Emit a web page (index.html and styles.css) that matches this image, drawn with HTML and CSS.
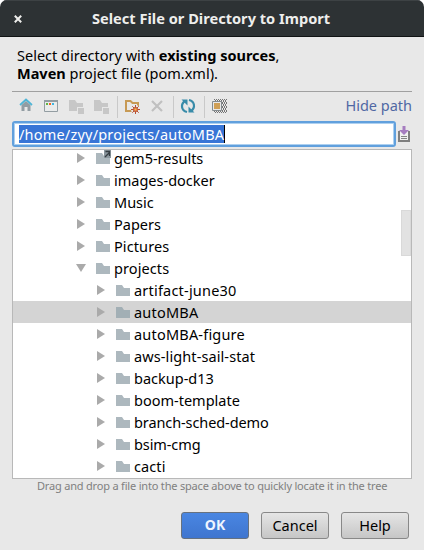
FILE: index.html
```
<!DOCTYPE html>
<html lang="en">
<head>
<meta charset="utf-8">
<title>Select File or Directory to Import</title>
<link rel="stylesheet" href="styles.css">
</head>
<body>
<svg width="0" height="0" class="defs">
  <defs>
    <symbol id="folder" viewBox="0 0 14 11"><path d="M0 0H6L8 3H14V11H0Z"/></symbol>
    <symbol id="right" viewBox="0 0 8 10"><path d="M0 0L8 5L0 10Z"/></symbol>
    <symbol id="down" viewBox="0 0 10 8"><path d="M0 0H10L5 8Z"/></symbol>
  </defs>
</svg>
<div class="window">
  <header class="titlebar">
    <svg class="close" width="8" height="8" viewBox="0 0 8 8"><path d="M.8 .8L7.2 7.2M7.2 .8L.8 7.2" stroke="#eeeeec" stroke-width="2"/></svg>
    <h1>Select File or Directory to Import</h1>
  </header>
  <main>
    <p class="intro">Select directory with <b>existing sources</b>,<br><b>Maven</b> project file (pom.xml).</p>
    <div class="toolbar">
      <svg width="220" height="28" viewBox="12 92 220 28">
        <path d="M21.5 105L26 101L30.500 105V111H27.500V107H24.500V111H21.500Z" fill="#929da3"/>
        <path d="M20 105L26 99.500L32 105" fill="none" stroke="#4fb5d6" stroke-width="1.700"/>
        <path d="M44.500 100.500H57.500V111.500H44.500Z" fill="#e9ebeb" stroke="#939da2"/><path d="M44 100H58V102H44Z" fill="#939da2"/>
        <path d="M46 103h2v2h-2z" fill="#62b543"/><path d="M49 103h2v2h-2z" fill="#f26522"/><path d="M52 103h2v2h-2z" fill="#40b6e0"/>
        <path d="M69 100H75L77 103H83V107H77V111H69ZM78 108H84V114H78Z" fill="#c7c7c7"/>
        <path d="M94 100H100L102 103H108V107H102V111H94ZM103 108H109V114H103Z" fill="#c7c7c7"/>
        <path d="M117.500 96V118M173.500 96V118M204.500 96V118" stroke="#c9c9c9"/>
        <path d="M126 101H130.500L132.500 103H138V111H126Z" fill="none" stroke="#c79a55" stroke-width="2"/>
        <circle cx="135.500" cy="109.500" r="4.500" fill="#e8e8e8"/>
        <path d="M135.500 105V114M131 109.500H140M132.300 106.300L138.700 112.700M138.700 106.300L132.300 112.700" stroke="#b94f32"/><circle cx="135.500" cy="109.500" r="2.300" fill="#dc7044" stroke="#a8482d" stroke-width=".6"/><circle cx="135.500" cy="109.500" r="1" fill="#f4c34a"/>
        <path d="M152 101L162 111M162 101L152 111" stroke="#c0c0c0" stroke-width="2.200"/>
        <path d="M187 112C181 110.500 180.500 104 185 101M189 100C195 101.500 195.500 108 191 111" fill="none" stroke="#398ca9" stroke-width="2.200"/>
        <path d="M181.500 99.500H187.500V105.500ZM194.500 112.500H188.500V106.500Z" fill="#398ca9"/>
        <path d="M214 99.500H227M213 101.500H227M214 103.500H227M213 105.500H227M214 107.500H227M213 109.500H227M214 111.500H227" stroke="#747474" stroke-dasharray="1 1"/>
        <path d="M215 100.500H227M214 102.500H227M215 104.500H227M214 106.500H227M215 108.500H227M214 110.500H227M215 112.500H227" stroke="#747474" stroke-dasharray="1 1"/>
        <path d="M212.500 101.500H221.500V110.500H212.500Z" fill="#e8e8e8" stroke="#848b8f"/><path d="M214 103H220V109H214Z" fill="#cf9f56"/>
      </svg>
      <a class="hide">Hide path</a>
    </div>
    <div class="path-row">
      <div class="input"><span class="selection">/home/zyy/projects/autoMBA</span></div>
      <svg width="12" height="16" viewBox="0 0 12 16"><path d="M1 5V15H11V5" fill="none" stroke="#7f7f7f" stroke-width="2"/><path d="M2 5H10V14H2Z" fill="#f0f0f0"/><path d="M3 10.500H9M3 12.500H9" stroke="#858585"/><path d="M4.500 0H7.500V4H11L6 9L1 4H4.500Z" fill="#a67dc0"/></svg>
    </div>
    <div class="tree">
      <ul>
        <li><svg class="arrow"><use href="#right"/></svg><svg class="folder"><use href="#folder"/></svg><span>gem5-results</span><svg class="link" width="7" height="8" viewBox="0 0 7 8"><path d="M0 0H7V8H0Z" fill="#8b979e"/><path d="M1 7L5.500 2.500M1.500 1.500H5.500V6" stroke="#353d42" stroke-width="1.300" fill="none"/></svg></li>
        <li><svg class="arrow"><use href="#right"/></svg><svg class="folder"><use href="#folder"/></svg><span>images-docker</span></li>
        <li><svg class="arrow"><use href="#right"/></svg><svg class="folder"><use href="#folder"/></svg><span>Music</span></li>
        <li><svg class="arrow"><use href="#right"/></svg><svg class="folder"><use href="#folder"/></svg><span>Papers</span></li>
        <li><svg class="arrow"><use href="#right"/></svg><svg class="folder"><use href="#folder"/></svg><span class="loose">Pictures</span></li>
        <li><svg class="arrow open"><use href="#down"/></svg><svg class="folder"><use href="#folder"/></svg><span class="loose">projects</span></li>
        <li class="child"><svg class="arrow"><use href="#right"/></svg><svg class="folder"><use href="#folder"/></svg><span class="looser">artifact-june30</span></li>
        <li class="child selected"><svg class="arrow"><use href="#right"/></svg><svg class="folder"><use href="#folder"/></svg><span class="looser">autoMBA</span></li>
        <li class="child"><svg class="arrow"><use href="#right"/></svg><svg class="folder"><use href="#folder"/></svg><span class="looser">autoMBA-figure</span></li>
        <li class="child"><svg class="arrow"><use href="#right"/></svg><svg class="folder"><use href="#folder"/></svg><span class="loose">aws-light-sail-stat</span></li>
        <li class="child"><svg class="arrow"><use href="#right"/></svg><svg class="folder"><use href="#folder"/></svg><span>backup-d13</span></li>
        <li class="child"><svg class="arrow"><use href="#right"/></svg><svg class="folder"><use href="#folder"/></svg><span>boom-template</span></li>
        <li class="child"><svg class="arrow"><use href="#right"/></svg><svg class="folder"><use href="#folder"/></svg><span class="tight">branch-sched-demo</span></li>
        <li class="child"><svg class="arrow"><use href="#right"/></svg><svg class="folder"><use href="#folder"/></svg><span class="tight">bsim-cmg</span></li>
        <li class="child"><svg class="arrow"><use href="#right"/></svg><svg class="folder"><use href="#folder"/></svg><span class="loose">cacti</span></li>
      </ul>
      <div class="thumb"></div>
    </div>
    <p class="hint">Drag and drop a file into the space above to quickly locate it in the tree</p>
    <div class="buttons">
      <button class="primary">OK</button><button>Cancel</button><button>Help</button>
    </div>
  </main>
</div>
</body>
</html>
```
FILE: styles.css
```
* { box-sizing: border-box; }
body { margin: 0; background: #fff; font: 14.5px/22px "Noto Sans", sans-serif; color: #000; }
.defs { position: absolute; }
.window { width: 424px; height: 550px; background: #e8e8e8; border-radius: 7px 7px 0 0; overflow: hidden; white-space: nowrap; }
.titlebar { height: 37px; display: flex; align-items: center; padding-left: 14px; background: #2d3234; border-top: 1px solid #3d4244; border-bottom: 1px solid #101314; }
.close { flex: none; }
h1 { margin: 0 0 2px 70px; font-size: 14.6px; line-height: 20px; color: #eeeeec; }
main { padding: 0 12px; }
.intro { margin: 0; padding: 9px 0 0 5px; height: 54px; line-height: 18px; }
.toolbar { height: 29px; border-top: 1px solid #a0a0a0; display: flex; justify-content: space-between; }
.hide { color: #5068a4; line-height: 27px; }
.path-row { display: flex; align-items: center; gap: 2px; height: 28px; margin-top: 1px; }
.path-row > svg { margin-top: -3px; }
.input { width: 384px; height: 26px; align-self: flex-start; background: #fff; border: 2px solid #61a0dd; border-radius: 3px; padding: 2px 5px; box-shadow: inset 0 0 0 1px #add0f0; }
.selection { display: inline-block; width: 206px; height: 18px; line-height: 18px; letter-spacing: .2px; background: #3875d6; color: #fff; border-right: 1px solid #000; vertical-align: top; }
.tree { position: relative; height: 330px; background: #fff; border: 1px solid #b8b8b8; overflow: hidden; }
ul { list-style: none; margin: -3px 0 0; padding: 0; }
li { position: relative; display: flex; align-items: center; height: 22px; padding-left: 64px; }
li.child { padding-left: 84px; }
li span { line-height: 20px; }
.loose { letter-spacing: .1px; }
.looser { letter-spacing: .2px; }
.tight { letter-spacing: -.1px; }
.selected { background: #d4d4d4; }
.arrow { width: 8px; height: 10px; margin-right: 11px; fill: #aaa; }
.arrow.open { width: 10px; height: 8px; margin-left: -1px; margin-right: 10px; }
.folder { width: 14px; height: 11px; margin-right: 4px; fill: #adb8be; }
.selected .folder { fill: #a2afb5; }
.link { position: absolute; left: 91px; top: 3px; }
.thumb { position: absolute; right: 0; top: 60px; width: 10px; height: 46px; background: #e2e2e2; border: 1px solid #d9d9d9; }
.hint { margin: 0; height: 33px; padding-left: 25px; font-size: 11px; letter-spacing: -.19px; line-height: 14px; color: #808080; }
.buttons { display: flex; justify-content: flex-end; gap: 12px; padding-right: 3px; }
button { width: 68px; height: 27px; padding: 0 0 2px; font: 14.5px/20px "Noto Sans", sans-serif; border: 1px solid #888; border-radius: 3px; background: linear-gradient(#e5e5e5, #c6c6c6); color: #000; }
.primary { font-weight: bold; font-size: 14px; color: #eef4ff; background: linear-gradient(#4986e2, #3f75cf); border-color: #66717f; }
```
